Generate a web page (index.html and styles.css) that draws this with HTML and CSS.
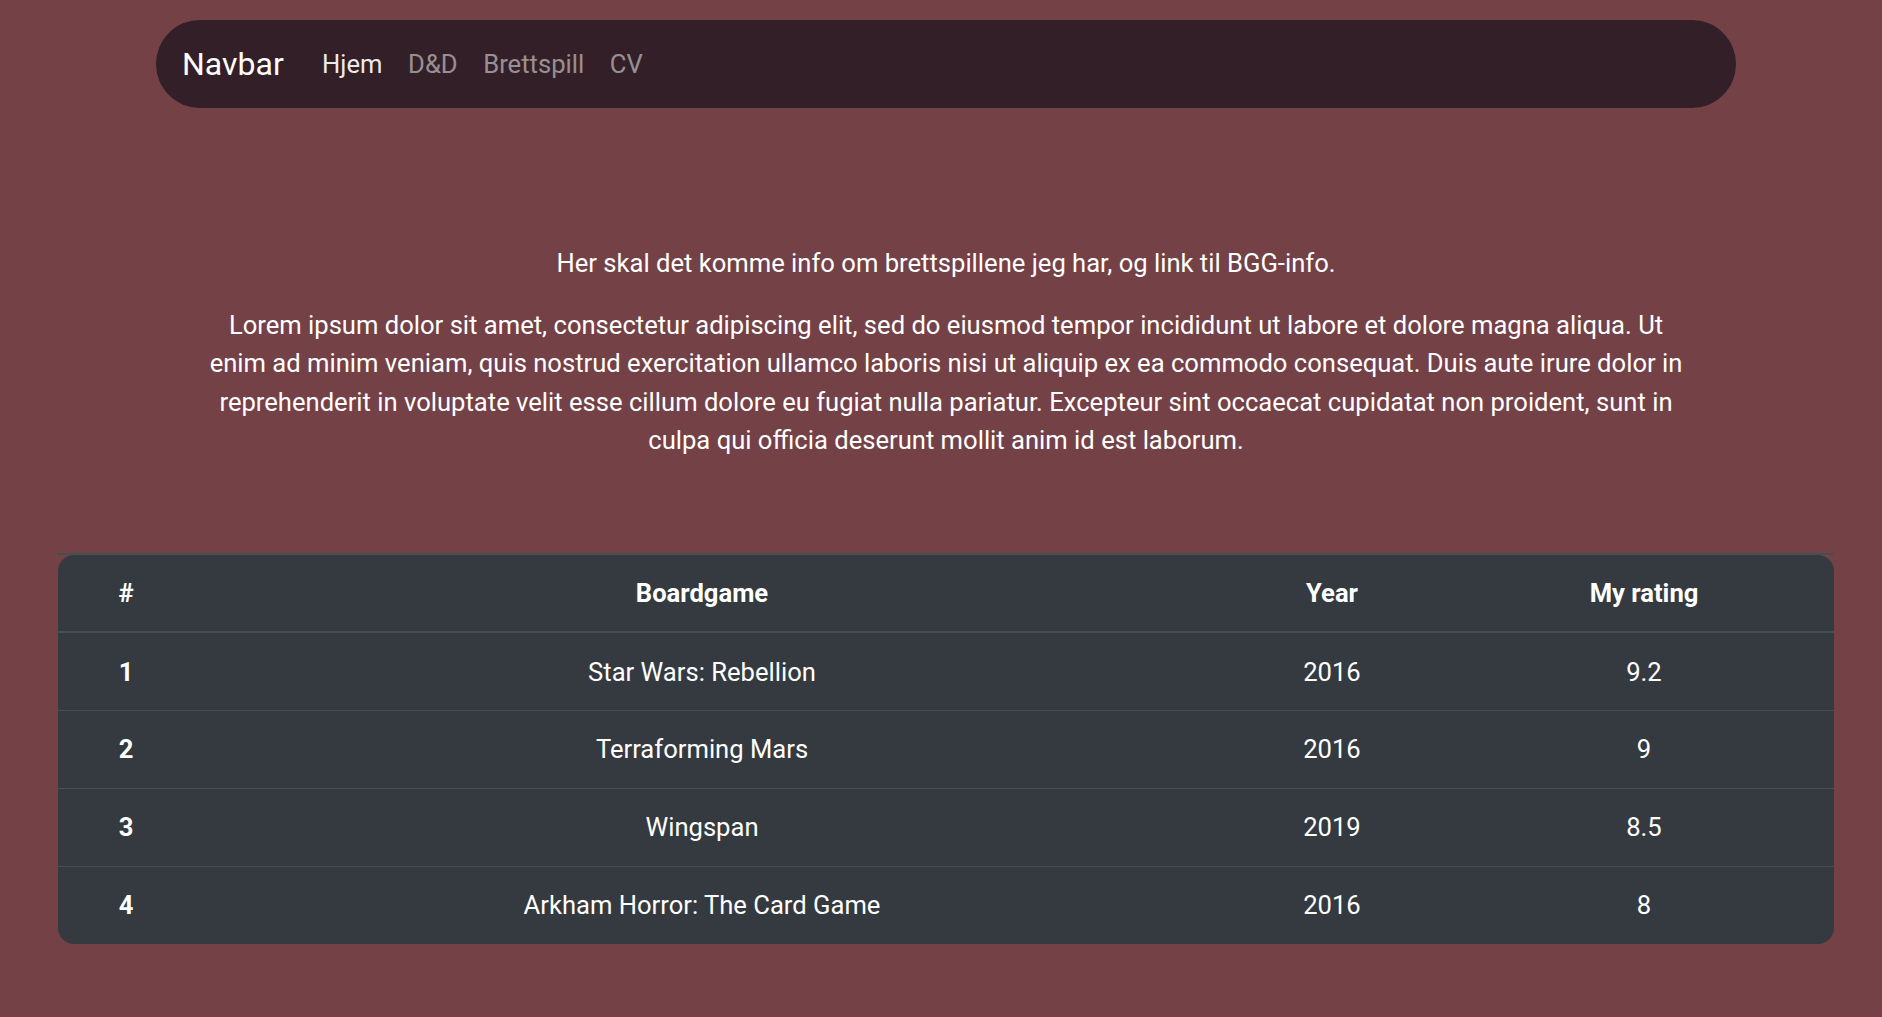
FILE: index.html
```html
<!DOCTYPE html>
<html lang="no">
<head>
<meta charset="utf-8">
<title>Brettspill</title>
<link rel="stylesheet" href="styles.css">
</head>
<body>
<div class="page">
  <nav class="navbar">
    <a class="brand" href="#">Navbar</a>
    <ul class="nav">
      <li><a class="nav-link active" href="#">Hjem</a></li>
      <li><a class="nav-link" href="#">D&amp;D</a></li>
      <li><a class="nav-link" href="#">Brettspill</a></li>
      <li><a class="nav-link" href="#">CV</a></li>
    </ul>
  </nav>

  <section class="intro">
    <p>Her skal det komme info om brettspillene jeg har, og link til BGG-info.</p>
    <p>Lorem ipsum dolor sit amet, consectetur adipiscing elit, sed do eiusmod tempor incididunt ut labore et dolore magna aliqua. Ut enim ad minim veniam, quis nostrud exercitation ullamco laboris nisi ut aliquip ex ea commodo consequat. Duis aute irure dolor in reprehenderit in voluptate velit esse cillum dolore eu fugiat nulla pariatur. Excepteur sint occaecat cupidatat non proident, sunt in culpa qui officia deserunt mollit anim id est laborum.</p>
  </section>

  <div class="table-wrap">
    <table class="games">
      <colgroup>
        <col class="c-num">
        <col class="c-name">
        <col class="c-year">
        <col class="c-rating">
      </colgroup>
      <thead>
        <tr><th>#</th><th>Boardgame</th><th>Year</th><th>My rating</th></tr>
      </thead>
      <tbody>
        <tr><th>1</th><td>Star Wars: Rebellion</td><td>2016</td><td>9.2</td></tr>
        <tr><th>2</th><td>Terraforming Mars</td><td>2016</td><td>9</td></tr>
        <tr><th>3</th><td>Wingspan</td><td>2019</td><td>8.5</td></tr>
        <tr><th>4</th><td>Arkham Horror: The Card Game</td><td>2016</td><td>8</td></tr>
      </tbody>
    </table>
  </div>
</div>
</body>
</html>
```

FILE: styles.css
```css
html, body {
  margin: 0;
  padding: 0;
}

body {
  background: #744147;
  color: #ffffff;
  font-family: Roboto, "Liberation Sans", Arial, sans-serif;
  font-size: 25.6px;
  line-height: 38.4px;
}

.page {
  padding: 20px 0 0 10px;
}

.navbar {
  width: 1580px;
  height: 88px;
  margin: 0 auto;
  box-sizing: border-box;
  padding: 0 26px;
  display: flex;
  align-items: center;
  background: #331f28;
  border-radius: 44px;
}

.brand {
  font-size: 32px;
  line-height: 48px;
  color: #ffffff;
  text-decoration: none;
  margin-right: 25.6px;
}

.nav {
  list-style: none;
  margin: 0;
  padding: 0;
  display: flex;
}

.nav-link {
  display: block;
  padding: 0 12.8px;
  font-size: 25.6px;
  line-height: 38.4px;
  color: rgba(255, 255, 255, 0.5);
  text-decoration: none;
}

.nav-link.active {
  color: rgba(255, 255, 255, 0.92);
}

.intro {
  max-width: 1484px;
  margin: 136px auto 0;
  text-align: center;
}

.intro p {
  margin: 0 0 23.6px;
}

.intro p:last-child {
  margin-bottom: 0;
}

.table-wrap {
  width: 1776px;
  margin: 93px auto 0;
  border-top: 2px solid #454d55;
}

.games {
  width: 100%;
  table-layout: fixed;
  border-collapse: separate;
  border-spacing: 0;
  background: #343a40;
  border-radius: 16px;
  color: #ffffff;
}

.c-num { width: 136px; }
.c-name { width: 1016px; }
.c-year { width: 244px; }
.c-rating { width: 380px; }

.games th,
.games td {
  padding: 19.2px;
  text-align: center;
  vertical-align: top;
  font-size: 25.6px;
  line-height: 38.4px;
}

.games th {
  font-weight: 700;
}

.games td {
  font-weight: 400;
}

.games thead th {
  border-bottom: 2px solid #454d55;
}

.games tbody tr + tr th,
.games tbody tr + tr td {
  border-top: 1px solid #454d55;
}
```
